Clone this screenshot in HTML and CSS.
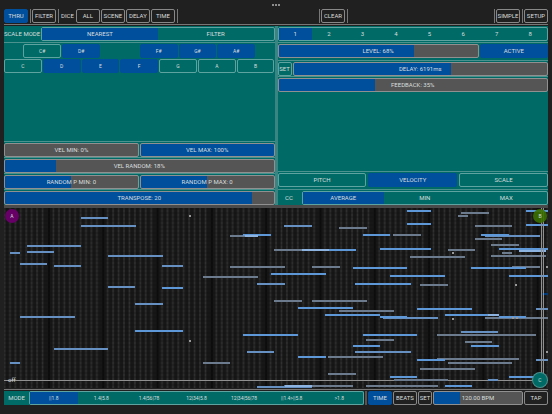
FILE: index.html
```html
<!DOCTYPE html>
<html lang="en">
  <head>
    <meta charset="utf-8" />
    <title>MIDI Delay</title>
    <link rel="stylesheet" href="styles.css" />
  </head>
  <body>
    <div class="app">
      <div class="dots"><i></i><i></i><i></i></div>

      <header class="toolbar">
        <div class="group">
          <button class="btn on" type="button">THRU</button>
          <span class="bar"></span>
          <button class="btn" type="button">FILTER</button>
          <span class="bar"></span>
          <span class="caption">DICE</span>
          <button class="btn" type="button">ALL</button>
          <button class="btn" type="button">SCENE</button>
          <button class="btn" type="button">DELAY</button>
          <button class="btn" type="button">TIME</button>
          <span class="bar"></span>
        </div>
        <div class="group center">
          <span class="bar"></span>
          <button class="btn" type="button">CLEAR</button>
          <span class="bar"></span>
        </div>
        <div class="group end">
          <span class="bar"></span>
          <button class="btn" type="button">SIMPLE</button>
          <span class="bar"></span>
          <button class="btn" type="button">SETUP</button>
        </div>
      </header>

      <main class="panels">
        <section class="panel">
          <div class="row">
            <span class="caption scale-caption">SCALE MODE</span>
            <div class="segments" role="radiogroup" aria-label="Scale mode">
              <label><input type="radio" name="scale" checked />NEAREST</label>
              <label><input type="radio" name="scale" />FILTER</label>
            </div>
          </div>
          <div class="keys line">
            <button class="key cs" type="button">C#</button>
            <button class="key ds on" type="button">D#</button>
            <button class="key fs on" type="button">F#</button>
            <button class="key gs on" type="button">G#</button>
            <button class="key as on" type="button">A#</button>
            <button class="key" type="button">C</button>
            <button class="key on" type="button">D</button>
            <button class="key on" type="button">E</button>
            <button class="key on" type="button">F</button>
            <button class="key" type="button">G</button>
            <button class="key" type="button">A</button>
            <button class="key" type="button">B</button>
          </div>
          <div class="spacer"></div>
          <div class="row line">
            <label class="slider" style="--fill: 0%">
              <input type="range" min="0" max="100" value="0" />
              <span>VEL MIN: 0%</span>
            </label>
            <label class="slider" style="--fill: 100%">
              <input type="range" min="0" max="100" value="100" />
              <span>VEL MAX: 100%</span>
            </label>
          </div>
          <div class="row line">
            <label class="slider" style="--fill: 19%">
              <input type="range" min="0" max="100" value="18" />
              <span>VEL RANDOM: 18%</span>
            </label>
          </div>
          <div class="row line">
            <label class="slider" style="--fill: 50%">
              <input type="range" min="-24" max="24" value="0" />
              <span>RANDOM P MIN: 0</span>
            </label>
            <label class="slider" style="--fill: 50%">
              <input type="range" min="-24" max="24" value="0" />
              <span>RANDOM P MAX: 0</span>
            </label>
          </div>
          <div class="row line">
            <label class="slider" style="--fill: 92%">
              <input type="range" min="-24" max="24" value="20" />
              <span>TRANSPOSE: 20</span>
            </label>
          </div>
        </section>

        <section class="panel">
          <div class="row">
            <div class="segments" role="radiogroup" aria-label="Delay">
              <label><input type="radio" name="delay" checked />1</label>
              <label><input type="radio" name="delay" />2</label>
              <label><input type="radio" name="delay" />3</label>
              <label><input type="radio" name="delay" />4</label>
              <label><input type="radio" name="delay" />5</label>
              <label><input type="radio" name="delay" />6</label>
              <label><input type="radio" name="delay" />7</label>
              <label><input type="radio" name="delay" />8</label>
            </div>
          </div>
          <div class="row line roomy level-row">
            <label class="slider" style="--fill: 68%">
              <input type="range" min="0" max="100" value="68" />
              <span>LEVEL: 68%</span>
            </label>
            <button class="btn on" type="button">ACTIVE</button>
          </div>
          <div class="row line">
            <button class="btn small" type="button">SET</button>
            <label class="slider" style="--fill: 62%">
              <input type="range" min="0" max="10000" value="6191" />
              <span>DELAY: 6191ms</span>
            </label>
          </div>
          <div class="row line">
            <label class="slider" style="--fill: 36%">
              <input type="range" min="0" max="100" value="35" />
              <span>FEEDBACK: 35%</span>
            </label>
          </div>
          <div class="spacer"></div>
          <div class="row line roomy thirds">
            <button class="btn" type="button">PITCH</button>
            <button class="btn on" type="button">VELOCITY</button>
            <button class="btn" type="button">SCALE</button>
          </div>
          <div class="row line">
            <span class="caption cc-caption">CC</span>
            <div class="segments" role="radiogroup" aria-label="CC mode">
              <label><input type="radio" name="cc" checked />AVERAGE</label>
              <label><input type="radio" name="cc" />MIN</label>
              <label><input type="radio" name="cc" />MAX</label>
            </div>
          </div>
        </section>
      </main>

      <div class="splitter"></div>

      <section class="roll">
        <svg class="notes" viewBox="0 0 544 180" preserveAspectRatio="none" aria-hidden="true">
          <defs>
            <pattern id="lanes" width="544" height="4" patternUnits="userSpaceOnUse">
              <path class="lane" d="M0 1H544" />
            </pattern>
            <pattern id="beats" x="44" width="54.3" height="180" patternUnits="userSpaceOnUse">
              <path class="measure" d="M0 0V180" />
              <path class="beat" d="M5.4 0V180M10.9 0V180M16.3 0V180M21.7 0V180M27.1 0V180M32.6 0V180M38 0V180M43.4 0V180M48.9 0V180" />
            </pattern>
          </defs>
          <rect width="544" height="180" fill="#171717" />
          <rect width="544" height="180" fill="url(#beats)" />
          <rect width="544" height="180" fill="url(#lanes)" />

          <path class="axis" d="M0 172.5H544" />

          <path class="note soft" d="M226 28H254M270 42H298M335 20H363M226 59H281M308 59H336M199 69H254M270 93H298M308 93H363M335 103H390M362 132H390M324 149H379M199 155H226M324 166H352M280 178H349M362 178H434" />
          <path class="note soft" d="M454 8H464M457 5H485M471 18H508M389 27H417M471 31H498M487 37H515M444 42H471M498 45H508M487 48H542M406 49H461M508 59H536M416 77H444M481 110H544M433 127H532M461 134H488M433 151H515M444 155H508M416 161H471M390 172H444" />
          <path class="note mid" d="M77 10H104M77 18H132M6 45H16M23 38H77M23 44H50M16 56H43M50 58H77M104 48H159M158 58H179M104 79H131M131 96H159M16 109H71M50 141H104M6 155H16M280 18H308M253 76H281M243 144H270M253 179H308M481 28H536M379 110H434M457 124H494M351 144H407M484 172H494M532 101H544M532 152H544" />
          <path class="note" d="M158 80H179M131 123H179M239 27H267M325 42H352M359 27H386M267 66H322M349 60H403M351 76H407M294 100H349M321 107H376M239 127H294M359 127H413M349 138H376M294 149H322M403 3H427M403 16H427M522 3H544M522 17H544M477 27H505M376 41H427M495 41H544M467 60H522M386 68H441M505 68H544M413 101H468M441 107H495M376 109H403M495 109H522M467 138H495M413 152H441M386 169H413M505 169H531M441 178H468" />
          <path class="note light" d="M241 28H254M298 42H325M281 178H308M515 43H542M484 107H495" />
          <path class="note dot" d="M185 8H187M185 133H187M448 45H450M511 77H513M448 111H450M542 59H544M542 144H544M508 110H510M512 110H514" />
          <path class="note deep" d="M538 86H544" />
          <path class="axis" d="M537.5 0V172M539.5 0V172" />
        </svg>
        <span class="off">off</span>
        <span class="marker a">A</span>
        <span class="marker b">B</span>
        <span class="marker c">C</span>
      </section>

      <footer class="transport">
        <div class="mode">
          <span class="caption">MODE</span>
          <div class="segments" role="radiogroup" aria-label="Mode">
            <label><input type="radio" name="mode" checked />||1.8</label>
            <label><input type="radio" name="mode" />1.4|5.8</label>
            <label><input type="radio" name="mode" />1.4|56|78</label>
            <label><input type="radio" name="mode" />12|34|5.8</label>
            <label><input type="radio" name="mode" />12|34|56|78</label>
            <label><input type="radio" name="mode" />||1.4&gt;||5.8</label>
            <label><input type="radio" name="mode" />&gt;1.8</label>
          </div>
        </div>
        <span class="grip"></span>
        <div class="tempo">
          <button class="btn on" type="button">TIME</button>
          <button class="btn" type="button">BEATS</button>
          <button class="btn small" type="button">SET</button>
          <label class="slider" style="--fill: 29%">
            <input type="range" min="20" max="360" value="120" />
            <span>120.00 BPM</span>
          </label>
          <button class="btn" type="button">TAP</button>
        </div>
      </footer>
    </div>
  </body>
</html>
```

FILE: styles.css
```css
* {
  box-sizing: border-box;
}

body {
  margin: 0;
  background-color: #202020;
  color: #d8dede;
  font-family: Roboto, "Liberation Sans", sans-serif;
  font-size: 6px;
  line-height: 8px;
}

.app {
  display: grid;
  grid-template-rows: 9px auto 179fr 3px 180fr auto;
  min-height: 100vh;
  padding: 0 4px;
}

.dots {
  display: flex;
  justify-content: center;
  align-items: center;
  gap: 1px;
}
.dots i {
  width: 2px;
  height: 2px;
  border-radius: 1px;
  background-color: #b0b0b0;
}

/* toolbar */
.toolbar {
  display: grid;
  grid-template-columns: 1fr auto 1fr;
  padding-bottom: 1px;
  border-bottom: 1px solid #777;
  margin-bottom: 1px;
}
.group {
  display: flex;
  gap: 1px;
}
.group.center {
  padding-left: 114px;
}
.group.end {
  justify-content: flex-end;
}
.bar {
  width: 1px;
  margin-left: 1px;
  background-color: #777;
}
.caption {
  display: flex;
  flex-shrink: 0;
  align-items: center;
  justify-content: center;
  padding: 0 1px;
  white-space: nowrap;
}

.btn,
.key {
  height: 14px;
  padding: 0;
  border: 1px solid #888;
  border-radius: 2px;
  background: none;
  color: inherit;
  font: inherit;
  text-align: center;
}
.btn {
  flex-shrink: 0;
  width: 24px;
}
.btn.small {
  width: 14px;
}
.btn.on,
.key.on {
  background-color: #004f9c;
  border-color: #004f9c;
}

/* panels */
.panels {
  display: grid;
  grid-template-columns: 1fr 1fr;
  gap: 3px;
  background-color: #3a8482;
}
.panel {
  display: flex;
  flex-direction: column;
  padding-top: 1px;
  background-color: #006a66;
}
.panel .btn,
.panel .key {
  border-color: #5fa3a0;
}
.panel .btn.on,
.panel .key.on {
  border-color: #004f9c;
}
.line {
  padding-top: 1px;
  border-top: 1px solid #4b918e;
}
.row + .keys,
.row + .level-row {
  margin-top: 1px;
}
.row {
  display: flex;
  gap: 1px;
}
.roomy {
  padding-bottom: 2px;
}
.spacer {
  flex: 1;
}
.scale-caption {
  width: 36px;
}
.cc-caption {
  width: 23px;
}
.level-row .slider {
  flex: 3;
}
.level-row .btn,
.thirds .btn {
  flex: 1;
}
.thirds {
  gap: 2px;
}

.segments {
  display: flex;
  flex: 1;
  height: 14px;
  border: 1px solid #5fa3a0;
  border-radius: 2px;
}
.segments label {
  display: flex;
  flex: 1;
  align-items: center;
  justify-content: center;
  white-space: nowrap;
}
.segments label:has(:checked) {
  background-color: #004f9c;
}
.segments input {
  appearance: none;
  width: 0;
  height: 0;
  margin: 0;
}

.keys {
  display: grid;
  grid-template-columns: repeat(14, 1fr);
  gap: 1px;
}
.key {
  grid-column-end: span 2;
  font-size: 5px;
}
.cs { grid-column-start: 2; }
.ds { grid-column-start: 4; }
.fs { grid-column-start: 8; }
.gs { grid-column-start: 10; }
.as { grid-column-start: 12; }

.slider {
  display: grid;
  flex: 1;
  height: 14px;
  border: 1px solid #909090;
  border-radius: 2px;
  overflow: hidden;
  background: linear-gradient(to right, #004f9c var(--fill), #555 var(--fill));
}
.slider input,
.slider span {
  grid-area: 1 / 1;
}
.slider input {
  appearance: none;
  width: 100%;
  height: 12px;
  margin: 0;
  background: none;
  opacity: 0;
}
.slider span {
  align-self: center;
  text-align: center;
  white-space: nowrap;
  pointer-events: none;
}

.splitter {
  background-color: #4a4a4a;
}

/* piano roll */
.roll {
  position: relative;
  min-height: 100px;
}
.notes {
  position: absolute;
  width: 100%;
  height: 100%;
}
.lane {
  stroke: #101010;
  stroke-opacity: 0.5;
}
.beat {
  stroke: #303030;
  stroke-width: 1.6;
}
.measure {
  stroke: #0c0c0c;
  stroke-width: 4;
}
.axis {
  stroke: #909090;
}
.note {
  fill: none;
  stroke: #5f98d8;
  stroke-width: 2;
}
.note.mid {
  stroke: #6690c2;
}
.note.soft {
  stroke: #6c7c8e;
}
.note.light {
  stroke: #8db4e0;
}
.note.dot {
  stroke: #999;
}
.note.deep {
  stroke: #003a78;
}
.off {
  position: absolute;
  left: 4px;
  bottom: 4px;
}
.marker {
  position: absolute;
  width: 14px;
  height: 14px;
  border-radius: 50%;
  font-size: 5px;
  line-height: 14px;
  text-align: center;
}
.marker.a {
  top: 1px;
  left: 1px;
  background-color: #660066;
}
.marker.b {
  top: 1px;
  right: 1px;
  background-color: rgba(58, 112, 0, 0.9);
}
.marker.c {
  right: 1px;
  bottom: 1px;
  background-color: #006a66;
  box-shadow: 0 0 0 1px #4b918e;
}

/* transport */
.transport {
  display: flex;
  gap: 1px;
  margin-top: 1px;
  padding: 1px 0 9px;
  border-top: 1px solid #777;
}
.mode {
  display: flex;
  flex: 2;
  background-color: #006a66;
}
.mode .caption {
  width: 25px;
}
.mode .segments {
  font-size: 5px;
}
.grip {
  width: 2px;
  background-color: #555;
}
.tempo {
  display: flex;
  flex: 1;
  gap: 1px;
}
```
